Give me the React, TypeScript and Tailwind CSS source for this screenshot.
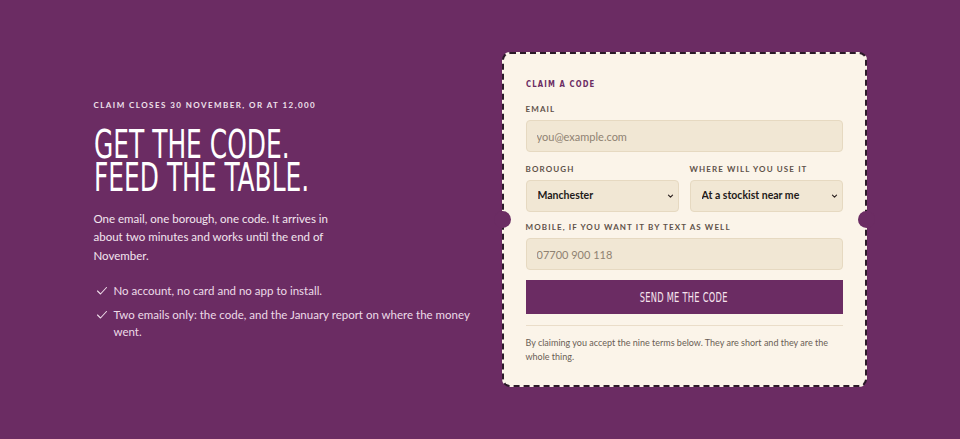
import React from "react";

const body = { fontFamily: "Lato, 'Liberation Sans', sans-serif" };
const cond = { fontFamily: "'DejaVu Sans Condensed', 'Liberation Sans Narrow', sans-serif" };

function Check() {
  return (
    <svg width="12" height="12" viewBox="0 0 24 24" fill="none" stroke="currentColor" strokeWidth="2.2" strokeLinecap="round" strokeLinejoin="round" className="mt-[3px] shrink-0">
      <path d="M21 5 9 18l-6-6" />
    </svg>
  );
}

function Chevron() {
  return (
    <svg width="7" height="7" viewBox="0 0 24 24" fill="none" stroke="#2b2120" strokeWidth="4" strokeLinecap="round" strokeLinejoin="round" className="pointer-events-none absolute right-[5px] top-1/2 -translate-y-1/2">
      <path d="m5 9 7 7 7-7" />
    </svg>
  );
}

function Label({ children }: { children: React.ReactNode }) {
  return (
    <div className="text-[8px] leading-[12px] font-bold tracking-[0.14em] text-[#5f5249] uppercase" style={body}>
      {children}
    </div>
  );
}

export default function App() {
  return (
    <div className="min-h-screen h-[439px] w-full bg-[#6b2c63] flex items-center justify-center">
      <div className="w-[773px] flex items-center justify-between">
        <div className="w-[390px] text-[#f3e6ef]" style={body}>
          <div className="text-[8px] leading-[12px] font-bold tracking-[0.18em] text-[#efe2ec]">CLAIM CLOSES 30 NOVEMBER, OR AT 12,000</div>
          <h1 className="mt-[17px] text-[39px] leading-[33px] text-white origin-left scale-x-[0.71] whitespace-nowrap" style={cond}>
            <span className="block">GET THE CODE.</span>
            <span className="block">FEED THE TABLE.</span>
          </h1>
          <p className="mt-[16px] w-[245px] text-[11.5px] leading-[18.5px] text-[#f3e6ef]">
            One email, one borough, one code. It arrives in about two minutes and works until the end of November.
          </p>
          <ul className="mt-[17px] flex flex-col gap-[7px] text-[11.5px] leading-[17px] text-[#eddbe8]">
            <li className="flex gap-[6px] pl-[2px]">
              <Check />
              <span>No account, no card and no app to install.</span>
            </li>
            <li className="flex gap-[6px] pl-[2px]">
              <Check />
              <span className="w-[366px]">Two emails only: the code, and the January report on where the money went.</span>
            </li>
          </ul>
        </div>

        <div className="relative w-[365px] rounded-[8px] border-2 border-dashed border-[#2c1a29] bg-[#fbf4e9] px-[22px] pt-[24px] pb-[21px]">
          <span className="absolute left-[-10px] top-[157px] h-[17px] w-[17px] rounded-full bg-[#6b2c63]" />
          <span className="absolute right-[-10px] top-[157px] h-[17px] w-[17px] rounded-full bg-[#6b2c63]" />
          <div className="text-[9px] leading-[12px] font-bold tracking-[0.15em] text-[#6b2c63] origin-left scale-x-[0.85]" style={cond}>CLAIM A CODE</div>

          <div className="mt-[13px]">
            <Label>Email</Label>
            <input
              placeholder="you@example.com"
              className="mt-[5px] block h-[32px] w-full rounded-[4px] border border-[#e6d9c1] bg-[#f1e7d4] px-[10px] text-[11px] text-[#2b2120] placeholder:text-[#8f8272] outline-none"
              style={body}
            />
          </div>

          <div className="mt-[11px] grid grid-cols-2 gap-[11px]">
            <div>
              <Label>Borough</Label>
              <div className="relative mt-[5px]">
                <select className="block h-[32px] w-full appearance-none rounded-[4px] border border-[#e6d9c1] bg-[#f1e7d4] pl-[11px] text-[10.5px] font-bold text-[#221a19] outline-none" style={body} defaultValue="Manchester">
                  <option>Manchester</option>
                </select>
                <Chevron />
              </div>
            </div>
            <div>
              <Label>Where will you use it</Label>
              <div className="relative mt-[5px]">
                <select className="block h-[32px] w-full appearance-none rounded-[4px] border border-[#e6d9c1] bg-[#f1e7d4] pl-[11px] text-[10.5px] font-bold text-[#221a19] outline-none" style={body} defaultValue="At a stockist near me">
                  <option>At a stockist near me</option>
                </select>
                <Chevron />
              </div>
            </div>
          </div>

          <div className="mt-[9px]">
            <Label>Mobile, if you want it by text as well</Label>
            <input
              placeholder="07700 900 118"
              className="mt-[5px] block h-[32px] w-full rounded-[4px] border border-[#e6d9c1] bg-[#f1e7d4] px-[10px] text-[11px] text-[#2b2120] placeholder:text-[#8f8272] outline-none"
              style={body}
            />
          </div>

          <button className="mt-[10px] flex h-[34px] w-full items-center justify-center bg-[#6b2c63] text-[#f7e4ef]">
            <span className="inline-block text-[13.5px] tracking-[0.03em] scale-x-[0.68]" style={cond}>SEND ME THE CODE</span>
          </button>

          <div className="mt-[11px] h-px w-full bg-[#eaddc9]" />

          <p className="mt-[10px] text-[9px] leading-[14px] text-[#6a5e55]" style={body}>
            By claiming you accept the nine terms below. They are short and they are the whole thing.
          </p>
        </div>
      </div>
    </div>
  );
}
